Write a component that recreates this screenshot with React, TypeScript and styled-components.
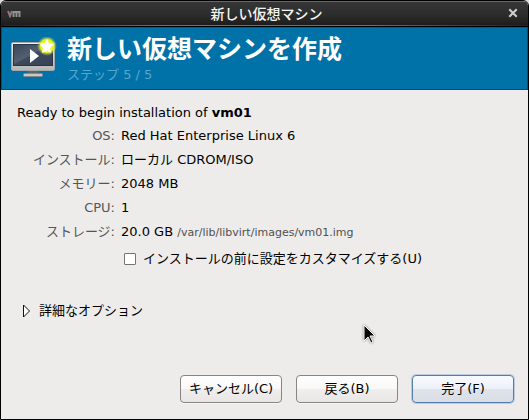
import React, { useState } from "react";
import styled, { createGlobalStyle } from "styled-components";

const GlobalStyle = createGlobalStyle`
  * { box-sizing: border-box; }
  body {
    margin: 0;
    background: #dcdcdc;
    font-family: "DejaVu Sans", "Noto Sans CJK JP", sans-serif;
    font-size: 13px;
    line-height: 20px;
    color: #000;
  }
  button, input { font: inherit; color: inherit; margin: 0; }
`;

const Window = styled.div`
  position: relative;
  display: flex;
  flex-direction: column;
  min-height: 100vh;
  border: 1px solid #000;
  border-radius: 6px 6px 0 0;
  background: #edeceb;
  overflow: hidden;
`;

const TitleBar = styled.header`
  display: grid;
  grid-template-columns: 26px 1fr 26px;
  align-items: center;
  height: 26px;
  padding: 0 2px 0 6px;
  border-top: 1px solid #686868;
  border-bottom: 1px solid #000;
  background:
    linear-gradient(90deg, #222, #61718c 30%, #61718c 70%, #222) bottom / 100% 1px no-repeat,
    linear-gradient(#363636, #2d2d2d 50%, #1b1b1b);
`;

const WindowTitle = styled.div`
  color: #f4f4f4;
  font-weight: 500;
  font-size: 14px;
  line-height: 22px;
  text-align: center;
`;

const CloseButton = styled.button`
  display: flex;
  padding: 6px 8px 8px;
  border: 0;
  background: none;
`;

const Banner = styled.section`
  display: flex;
  align-items: center;
  gap: 10px;
  height: 63px;
  padding: 0 9px;
  border: 1px solid #174866;
  border-top-color: #0c5784;
  background: #0072a8;
`;

const Heading = styled.h1`
  margin: 0;
  color: #fff;
  font-size: 25px;
  line-height: 32px;
  font-weight: 700;
`;

const Step = styled.p`
  margin: 0;
  color: #58a7d0;
  line-height: 18px;
`;

const Body = styled.main`
  flex: 1;
  display: flex;
  flex-direction: column;
  padding: 13px 14px 16px 16px;
`;

const Intro = styled.p`
  margin: 0 0 1px;
`;

const Summary = styled.dl`
  display: grid;
  grid-template-columns: 98px 1fr;
  column-gap: 6px;
  margin: 0;
  line-height: 24px;
`;

const Label = styled.dt`
  color: #555;
  text-align: right;
  white-space: nowrap;
`;

const Value = styled.dd`
  margin: 0;
  white-space: nowrap;
`;

const Path = styled.span`
  color: #505050;
  font-size: 11px;
`;

const Customize = styled.label`
  display: flex;
  align-items: center;
  gap: 7px;
  margin: 4px 0 0 107px;
`;

const Checkbox = styled.input`
  appearance: none;
  width: 12px;
  height: 12px;
  border: 1px solid #777470;
  border-radius: 1px;
  background: #fff;
  &:checked { background: #3465a4; }
`;

const Expander = styled.button`
  display: flex;
  align-items: center;
  gap: 8px;
  align-self: flex-start;
  margin-top: 32px;
  padding: 0 0 0 5px;
  border: 0;
  background: none;
`;

const Actions = styled.footer`
  display: flex;
  justify-content: flex-end;
  gap: 14px;
  margin-top: auto;
`;

const ActionButton = styled.button<{ $primary?: boolean }>`
  width: 102px;
  height: 28px;
  padding: 0;
  white-space: nowrap;
  border: 1px solid ${(p) => (p.$primary ? "#547dad" : "#888682")};
  border-radius: 4px;
  background: ${(p) =>
    p.$primary
      ? "linear-gradient(#f8faff, #edf1f7 50%, #dfe3ea 52%, #d9dde4)"
      : "linear-gradient(#fff, #f8f8f7 50%, #efeeed 52%, #e8e7e6)"};
  box-shadow: ${(p) => (p.$primary ? "0 0 0 1px #b9cce3" : "0 1px 0 #f7f6f5")};
`;

const Pointer = styled.svg`
  position: absolute;
  left: 362px;
  top: 323px;
  pointer-events: none;
  filter: drop-shadow(0 0 1px #777);
`;

const VmLogo = () => (
  <svg width="14" height="8" viewBox="0 0 14 8" fill="none" aria-hidden="true">
    <path d="M1 1l2 5 2-5" stroke="#93777e" strokeWidth="2" />
    <path d="M6.5 7V2h6v5M9.5 2v5" stroke="#8e9293" strokeWidth="2" />
  </svg>
);

const MachineIcon = () => (
  <svg width="46" height="44" viewBox="0 0 46 44" aria-hidden="true">
    <defs>
      <linearGradient id="frame" x2="0" y2="1">
        <stop stopColor="#f4f4f4" />
        <stop offset="1" stopColor="#b5b5b5" />
      </linearGradient>
      <linearGradient id="screen" x2="1" y2="1">
        <stop stopColor="#3a4658" />
        <stop offset=".45" stopColor="#536072" />
        <stop offset=".5" stopColor="#3d495c" />
        <stop offset="1" stopColor="#354156" />
      </linearGradient>
      <radialGradient id="glow">
        <stop stopColor="#ffff70" />
        <stop offset=".65" stopColor="#e8ef20" />
        <stop offset="1" stopColor="#9cc94c" stopOpacity="0" />
      </radialGradient>
    </defs>
    <path d="M17 34h11v4H17z" fill="#606668" />
    <rect x="12.5" y="36.5" width="19" height="3" rx="1" fill="#c7c8c8" stroke="#858889" />
    <rect x="0.5" y="5.5" width="43" height="28" rx="1.5" fill="url(#frame)" stroke="#a5a8a9" />
    <rect x="2.5" y="7.5" width="39" height="21" fill="url(#screen)" stroke="#293446" />
    <path d="M19 12v14l9-7z" fill="#fff" />
    <circle cx="36" cy="9" r="10" fill="url(#glow)" />
    <path d="M36 2l2 4.500 5 .5-4 4 1 5-4-2-5 2 1-5-3-4 5-1z" fill="#fff" />
  </svg>
);

export default function App() {
  const [customize, setCustomize] = useState(false);
  return (
    <>
      <GlobalStyle />
      <Window>
        <TitleBar>
          <VmLogo />
          <WindowTitle>新しい仮想マシン</WindowTitle>
          <CloseButton type="button" aria-label="閉じる">
            <svg width="10" height="10" viewBox="0 0 10 10" aria-hidden="true">
              <path d="M2 2l6 6M8 2L2 8" stroke="#d0d0d0" strokeWidth="2" strokeLinecap="square" />
            </svg>
          </CloseButton>
        </TitleBar>
        <Banner>
          <MachineIcon />
          <div>
            <Heading>新しい仮想マシンを作成</Heading>
            <Step>ステップ 5 / 5</Step>
          </div>
        </Banner>
        <Body>
          <Intro>
            Ready to begin installation of <b>vm01</b>
          </Intro>
          <Summary>
            <Label>OS:</Label>
            <Value>Red Hat Enterprise Linux 6</Value>
            <Label>インストール:</Label>
            <Value>ローカル CDROM/ISO</Value>
            <Label>メモリー:</Label>
            <Value>2048 MB</Value>
            <Label>CPU:</Label>
            <Value>1</Value>
            <Label>ストレージ:</Label>
            <Value>
              20.0 GB <Path>/var/lib/libvirt/images/vm01.img</Path>
            </Value>
          </Summary>
          <Customize>
            <Checkbox type="checkbox" checked={customize} onChange={(e) => setCustomize(e.target.checked)} />
            インストールの前に設定をカスタマイズする(U)
          </Customize>
          <Expander type="button" aria-expanded={false}>
            <svg width="9" height="14" viewBox="0 0 9 14" aria-hidden="true">
              <path d="M1.500 1v12l6-6z" fill="#fff" stroke="#111" />
            </svg>
            詳細なオプション
          </Expander>
          <Actions>
            <ActionButton type="button">キャンセル(C)</ActionButton>
            <ActionButton type="button">戻る(B)</ActionButton>
            <ActionButton type="button" $primary>完了(F)</ActionButton>
          </Actions>
        </Body>
        <Pointer width="14" height="21" viewBox="0 0 14 21" aria-hidden="true">
          <path d="M1 1v16l4-4 3 6 2-1-3-6h5z" fill="#080808" stroke="#fff" />
        </Pointer>
      </Window>
    </>
  );
}
